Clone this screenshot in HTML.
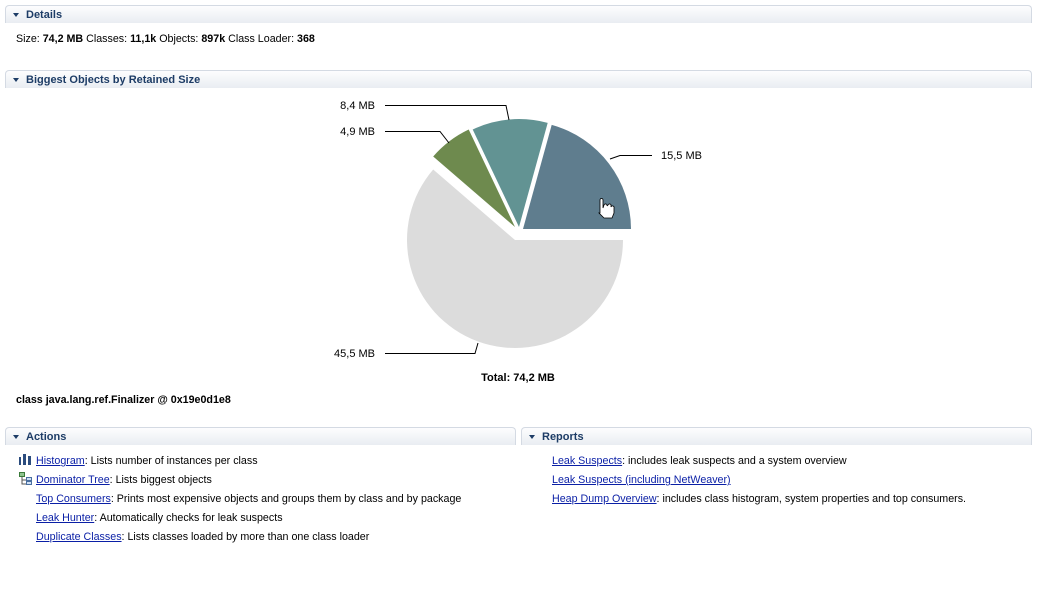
<!DOCTYPE html>
<html><head><meta charset="utf-8"><style>
body{margin:0;width:1038px;height:610px;background:#fff;font-family:"Liberation Sans",sans-serif;font-size:10.7px;color:#000;position:relative;overflow:hidden}
.h{position:absolute;height:18px;border:1px solid #d4dae3;border-bottom:none;border-radius:4px 4px 0 0;background:linear-gradient(#fdfdfe,#e9edf2);box-sizing:border-box}
.h span{position:absolute;left:20px;top:3px;font-weight:bold;color:#1d3c66;font-size:11px}
.h i{position:absolute;left:7px;top:7px;width:0;height:0;border-left:3.5px solid transparent;border-right:3.5px solid transparent;border-top:4px solid #1d3c66}
.t{position:absolute;white-space:nowrap}
a{color:#0a1fa6;text-decoration:underline}
</style></head><body>
<div class="h" style="left:5px;top:5px;width:1027px"><i></i><span>Details</span></div>
<div class="t" style="left:16px;top:33px">Size: <b>74,2 MB</b> Classes: <b>11,1k</b> Objects: <b>897k</b> Class Loader: <b>368</b></div>
<div class="h" style="left:5px;top:70px;width:1027px"><i></i><span>Biggest Objects by Retained Size</span></div>
<svg style="position:absolute;left:0;top:0" width="1038" height="400">
<path d="M515,240 L623,240 A108,108 0 1 1 433.2,169.5 Z" fill="#dcdcdc"/>
<path d="M515,227 L433.2,156.5 A108,108 0 0 1 468.7,129.5 Z" fill="#6e8a4e"/>
<path d="M519,227 L472.7,129.5 A108,108 0 0 1 547.7,122.9 Z" fill="#629393"/>
<path d="M523,229 L551.7,124.9 A108,108 0 0 1 631,229 Z" fill="#5f7d8e"/>
<g fill="none" stroke="#000" stroke-width="1">
<polyline points="385,105.5 506,105.5 509,120"/>
<polyline points="385,131.5 440,131.5 449,143"/>
<polyline points="610,159 620,155.5 652,155.5"/>
<polyline points="385,353.5 475,353.5 478,343"/>
</g>
<g font-family="Liberation Sans" font-size="11" fill="#000">
<text x="375" y="109" text-anchor="end">8,4 MB</text>
<text x="375" y="135" text-anchor="end">4,9 MB</text>
<text x="661" y="159">15,5 MB</text>
<text x="375" y="357" text-anchor="end">45,5 MB</text>
<text x="518" y="381" text-anchor="middle" font-weight="bold">Total: 74,2 MB</text>
</g>
<path d="M600,213 v-13 a1.5,1.5 0 0 1 3,0 v8 l1,-3 a1.5,1.5 0 0 1 3,1 l1,-1 a1.5,1.5 0 0 1 3,1 v1 a1.5,1.5 0 0 1 3,1 v5 l-2,5 h-8 l-5,-5 z" fill="#fff" stroke="#000" stroke-width="0.8"/>
</svg>
<div class="t" style="left:16px;top:394px;font-weight:bold">class java.lang.ref.Finalizer @ 0x19e0d1e8</div>
<div class="h" style="left:5px;top:427px;width:511px"><i></i><span>Actions</span></div>
<div class="h" style="left:521px;top:427px;width:511px"><i></i><span>Reports</span></div>
<svg style="position:absolute;left:19px;top:454px" width="14" height="32">
<rect x="0" y="3" width="2" height="8" fill="#2b4c7e"/><rect x="4" y="0" width="3" height="11" fill="#2b4c7e"/><rect x="9" y="2" width="3" height="9" fill="#2b4c7e"/>
<rect x="0.5" y="18.5" width="5" height="4" fill="#8fc48f" stroke="#3a7a3a"/><path d="M3,23v7h4M3,26h4" stroke="#555" fill="none"/><rect x="7.5" y="23.5" width="5" height="3" fill="#cfe0f5" stroke="#4a6fa0"/><rect x="7.5" y="27.5" width="5" height="3" fill="#cfe0f5" stroke="#4a6fa0"/>
</svg>
<div class="t" style="left:36px;top:455px"><a>Histogram</a>: Lists number of instances per class</div>
<div class="t" style="left:36px;top:474px"><a>Dominator Tree</a>: Lists biggest objects</div>
<div class="t" style="left:36px;top:493px"><a>Top Consumers</a>: Prints most expensive objects and groups them by class and by package</div>
<div class="t" style="left:36px;top:512px"><a>Leak Hunter</a>: Automatically checks for leak suspects</div>
<div class="t" style="left:36px;top:531px"><a>Duplicate Classes</a>: Lists classes loaded by more than one class loader</div>
<div class="t" style="left:552px;top:455px"><a>Leak Suspects</a>: includes leak suspects and a system overview</div>
<div class="t" style="left:552px;top:474px"><a>Leak Suspects (including NetWeaver)</a></div>
<div class="t" style="left:552px;top:493px"><a>Heap Dump Overview</a>: includes class histogram, system properties and top consumers.</div>
</body></html>
